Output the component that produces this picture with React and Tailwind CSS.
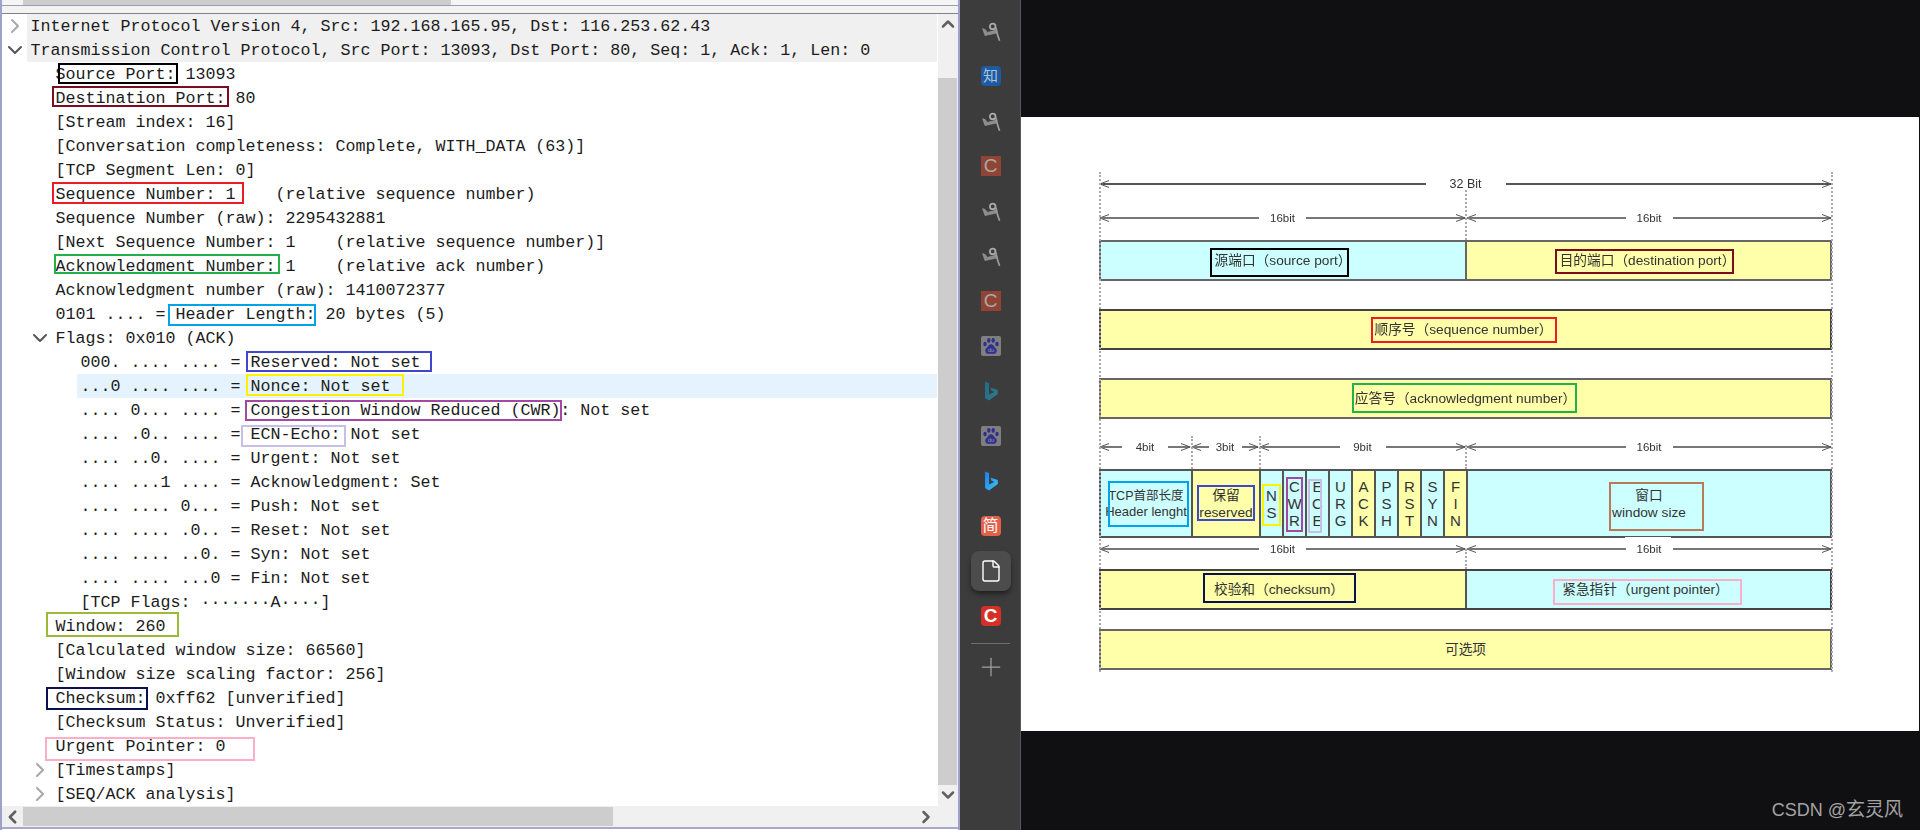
import { ChevronDown, ChevronLeft, ChevronRight, ChevronUp, File, Plus } from "lucide-react";

const rows = [
  { text: "Internet Protocol Version 4, Src: 192.168.165.95, Dst: 116.253.62.43", depth: 0, icon: "right", band: true },
  { text: "Transmission Control Protocol, Src Port: 13093, Dst Port: 80, Seq: 1, Ack: 1, Len: 0", depth: 0, icon: "down", band: true },
  { text: "Source Port: 13093", depth: 1 },
  { text: "Destination Port: 80", depth: 1 },
  { text: "[Stream index: 16]", depth: 1 },
  { text: "[Conversation completeness: Complete, WITH_DATA (63)]", depth: 1 },
  { text: "[TCP Segment Len: 0]", depth: 1 },
  { text: "Sequence Number: 1    (relative sequence number)", depth: 1 },
  { text: "Sequence Number (raw): 2295432881", depth: 1 },
  { text: "[Next Sequence Number: 1    (relative sequence number)]", depth: 1 },
  { text: "Acknowledgment Number: 1    (relative ack number)", depth: 1 },
  { text: "Acknowledgment number (raw): 1410072377", depth: 1 },
  { text: "0101 .... = Header Length: 20 bytes (5)", depth: 1 },
  { text: "Flags: 0x010 (ACK)", depth: 1, icon: "down" },
  { text: "000. .... .... = Reserved: Not set", depth: 2 },
  { text: "...0 .... .... = Nonce: Not set", depth: 2, selected: true },
  { text: ".... 0... .... = Congestion Window Reduced (CWR): Not set", depth: 2 },
  { text: ".... .0.. .... = ECN-Echo: Not set", depth: 2 },
  { text: ".... ..0. .... = Urgent: Not set", depth: 2 },
  { text: ".... ...1 .... = Acknowledgment: Set", depth: 2 },
  { text: ".... .... 0... = Push: Not set", depth: 2 },
  { text: ".... .... .0.. = Reset: Not set", depth: 2 },
  { text: ".... .... ..0. = Syn: Not set", depth: 2 },
  { text: ".... .... ...0 = Fin: Not set", depth: 2 },
  { text: "[TCP Flags: ·······A····]", depth: 2 },
  { text: "Window: 260", depth: 1 },
  { text: "[Calculated window size: 66560]", depth: 1 },
  { text: "[Window size scaling factor: 256]", depth: 1 },
  { text: "Checksum: 0xff62 [unverified]", depth: 1 },
  { text: "[Checksum Status: Unverified]", depth: 1 },
  { text: "Urgent Pointer: 0", depth: 1 },
  { text: "[Timestamps]", depth: 1, icon: "right" },
  { text: "[SEQ/ACK analysis]", depth: 1, icon: "right" },
];

const indents = ["ml-0", "ml-[25px]", "ml-[50px]"];

// hand drawn marks that sit over the packet tree
const treeMarks = [
  "left-[56px] top-[49px] w-[120px] h-[21px] border-black",
  "left-[50px] top-[72px] w-[177px] h-[21px] border-[#7b0c22]",
  "left-[50px] top-[168px] w-[192px] h-[22px] border-[#ed1c24]",
  "left-[52px] top-[240px] w-[226px] h-[20px] border-[#22b14c]",
  "left-[166px] top-[290px] w-[148px] h-[22px] border-[#00a2e8]",
  "left-[244px] top-[337px] w-[186px] h-[21px] border-[#3f48cc]",
  "left-[244px] top-[360px] w-[158px] h-[22px] border-[#fff200]",
  "left-[243px] top-[386px] w-[317px] h-[21px] border-[#a349a4]",
  "left-[239px] top-[411px] w-[105px] h-[22px] border-[#c8bfe7]",
  "left-[44px] top-[598px] w-[133px] h-[25px] border-[#9bbb38]",
  "left-[44px] top-[673px] w-[102px] h-[23px] border-[#0a1050]",
  "left-[43px] top-[723px] w-[210px] h-[24px] border-[#ffaec9]",
];

// same marks on the diagram, coordinates from the diagram's top left
const diagramMarks = [
  "left-[110px] top-[76px] w-[139px] h-[29px] border-black",
  "left-[455px] top-[77px] w-[179px] h-[25px] border-[#7b0c22]",
  "left-[271px] top-[145px] w-[186px] h-[26px] border-[#ed1c24]",
  "left-[252px] top-[211px] w-[225px] h-[30px] border-[#22b14c]",
  "left-[8px] top-[309px] w-[81px] h-[46px] border-[#00a2e8]",
  "left-[97px] top-[313px] w-[58px] h-[36px] border-[#3f48cc]",
  "left-[162px] top-[312px] w-[19px] h-[42px] border-[#fff200]",
  "left-[186px] top-[305px] w-[17px] h-[55px] border-[#a349a4]",
  "left-[208px] top-[307px] w-[14px] h-[54px] border-[#c8bfe7]",
  "left-[509px] top-[310px] w-[95px] h-[49px] border-[#b97a57]",
  "left-[103px] top-[401px] w-[153px] h-[30px] border-[#0a1050]",
  "left-[453px] top-[407px] w-[189px] h-[26px] border-[#ffaec9]",
];

const flagCells = [
  { label: "NS", bg: "bg-[#ccffff]" },
  { label: "CWR", bg: "bg-[#ccffff]" },
  { label: "ECE", bg: "bg-[#ccffff]" },
  { label: "URG", bg: "bg-[#ccffff]" },
  { label: "ACK", bg: "bg-[#ffffaa]" },
  { label: "PSH", bg: "bg-[#ccffff]" },
  { label: "RST", bg: "bg-[#ffffaa]" },
  { label: "SYN", bg: "bg-[#ccffff]" },
  { label: "FIN", bg: "bg-[#ffffaa]" },
];

const Ghost = () => (
  <svg width="20" height="20" viewBox="0 0 20 20" fill="none" stroke="#9c9c9c">
    <circle cx="11.7" cy="5.4" r="2.8" strokeWidth="1.8" stroke="#ababab" />
    <path d="M1.6 7.6 4 14.6 15.6 12 15 9 6.4 11.4 4.2 8.6Z" fill="#8c8c8c" strokeWidth="0.6" />
    <path d="M15 6.6C15.6 10.5 16.8 15.5 18.6 19.8" strokeWidth="1.7" />
  </svg>
);

const TileC = () => (
  <div className="w-5 h-5 bg-[#8f4436] text-[#a9a9a9] text-[19px] leading-5 text-center">C</div>
);

const Baidu = () => (
  <div className="w-5 h-5 bg-[#7f7f7f] rounded-[2px] flex items-center justify-center">
    <svg width="18" height="18" viewBox="0 0 18 18" fill="#2e2f8f">
      <ellipse cx="3" cy="7" rx="1.7" ry="2.2" />
      <ellipse cx="6.8" cy="3.4" rx="1.7" ry="2.3" />
      <ellipse cx="11.2" cy="3.4" rx="1.7" ry="2.3" />
      <ellipse cx="15" cy="7" rx="1.7" ry="2.2" />
      <path d="M9 7.2C6.6 7.2 6 10 4 11.5 2.4 13 3.4 16.8 6.2 16.8H11.8C14.6 16.8 15.6 13 14 11.5 12 10 11.4 7.2 9 7.2Z" />
      <text x="9" y="15.4" fontSize="6" textAnchor="middle" fill="#9a9a9a" fontFamily="Liberation Sans">du</text>
    </svg>
  </div>
);

const Bing = ({ id, from, to }) => (
  <svg width="20" height="20" viewBox="0 0 20 20">
    <defs>
      <linearGradient id={id} x1="0" y1="0" x2="1" y2="1">
        <stop offset="0" stopColor={from} />
        <stop offset="1" stopColor={to} />
      </linearGradient>
    </defs>
    <path d="M4 .5 8 2V13.6L13.2 11 10.6 9.8 9.4 6.4 16.8 9V13L8 19.5 4 17Z" fill={`url(#${id})`} />
  </svg>
);

const TextTile = ({ className, children }) => (
  <div className={`w-5 h-5 rounded-[4px] flex items-center justify-center ${className}`}>{children}</div>
);

const sidebarIcons = [
  <Ghost />,
  <TextTile className="bg-[#1f5a9e] text-[#a9c3e0] text-[15px]">知</TextTile>,
  <Ghost />,
  <TileC />,
  <Ghost />,
  <Ghost />,
  <TileC />,
  <Baidu />,
  <Bing id="bing-dim" from="#236a86" to="#2b7c8c" />,
  <Baidu />,
  <Bing id="bing-on" from="#1b7cf0" to="#38c8f0" />,
  <TextTile className="bg-[#e4604a] text-white text-[16px]">简</TextTile>,
  <File size={24} strokeWidth={1.4} className="text-white" />,
  <TextTile className="bg-[#d62f25] text-white text-[19px] font-bold">C</TextTile>,
];

const ArrowLeft = () => (
  <svg width="10" height="8" viewBox="0 0 10 8" fill="none" stroke="#555" className="shrink-0 -mr-[9px]">
    <path d="M10 .5 .8 4 10 7.5" />
  </svg>
);

const ArrowRight = () => (
  <svg width="10" height="8" viewBox="0 0 10 8" fill="none" stroke="#555" className="shrink-0 -ml-[9px]">
    <path d="M0 .5 9.2 4 0 7.5" />
  </svg>
);

const Dim = ({ className, gap, label, line = "bg-[#777]" }) => (
  <div className={`flex items-center ${className}`}>
    <ArrowLeft />
    <div className={`flex-1 h-[2px] ${line}`} />
    <div className={`text-center text-[#333] ${gap}`}>{label}</div>
    <div className={`flex-1 h-[2px] ${line}`} />
    <ArrowRight />
  </div>
);

const Diagram = () => (
  <div className="relative w-[732px]">
    <div className="relative -ml-px w-[733px] flex flex-col blur-[0.4px] text-[13.7px] text-[#333] leading-[17px]">
      <Dim className="h-6" gap="w-[80px] text-[12.5px]" label="32 Bit" line="bg-[#555]" />

      <div className="flex h-5 mt-3">
        <Dim className="w-[367px]" gap="w-[47px] text-[11.5px]" label="16bit" />
        <Dim className="flex-1" gap="w-[47px] text-[11.5px]" label="16bit" />
      </div>

      <div className="flex h-[41px] mt-3 border-2 border-[#666]">
        <div className="w-[364px] bg-[#ccffff] flex items-center justify-center">源端口（source port）</div>
        <div className="flex-1 bg-[#ffffaa] border-l-2 border-[#666] flex items-center justify-center pr-[2px]">目的端口（destination port）</div>
      </div>

      <div className="h-[41px] mt-7 border-2 border-[#444] bg-[#ffffaa] flex items-center justify-center pr-[4px]">顺序号（sequence number）</div>

      <div className="h-[41px] mt-7 border-2 border-[#666] bg-[#ffffaa] flex items-center justify-center">应答号（acknowledgment number）</div>

      <div className="flex h-5 mt-[18px]">
        <Dim className="w-[92px]" gap="w-[46px] text-[11.5px]" label="4bit" />
        <Dim className="w-[68px]" gap="w-[33px] text-[11.5px]" label="3bit" />
        <Dim className="w-[207px]" gap="w-[46px] text-[11.5px]" label="9bit" />
        <Dim className="flex-1" gap="w-[47px] text-[11.5px]" label="16bit" />
      </div>

      <div className="flex h-[69px] mt-3 border-2 border-[#555]">
        <div className="w-[90px] bg-[#ccffff] flex flex-col items-center justify-center text-[13px] leading-[16px] whitespace-nowrap">
          <div className="text-[12.5px]">TCP首部长度</div>
          <div>Header lenght</div>
        </div>
        <div className="w-[68px] bg-[#ffffaa] border-l-2 border-[#555] flex flex-col items-center justify-center">
          <div>保留</div>
          <div>reserved</div>
        </div>
        {flagCells.map((cell) => (
          <div key={cell.label} className={`w-[23px] border-l-2 border-[#555] flex flex-col items-center justify-center text-[15px] ${cell.bg}`}>
            {cell.label.split("").map((letter, i) => (
              <div key={i}>{letter}</div>
            ))}
          </div>
        ))}
        <div className="flex-1 bg-[#ccffff] border-l-2 border-[#555] flex flex-col items-center justify-center">
          <div>窗口</div>
          <div>window size</div>
        </div>
      </div>

      <div className="flex h-5 mt-px">
        <Dim className="w-[367px]" gap="w-[47px] text-[11.5px]" label="16bit" />
        <Dim className="flex-1" gap="w-[47px] text-[11.5px]" label="16bit" />
      </div>

      <div className="flex h-[41px] mt-[10px] border-2 border-[#444]">
        <div className="w-[364px] bg-[#ffffaa] flex items-center justify-center pr-[8px]">校验和（checksum）</div>
        <div className="flex-1 bg-[#ccffff] border-l-2 border-[#555] flex items-center justify-center pr-[6px]">紧急指针（urgent pointer）</div>
      </div>

      <div className="h-[41px] mt-[19px] border-2 border-[#666] bg-[#ffffaa] flex items-center justify-center">可选项</div>

      {/* dotted guides */}
      <div className="absolute left-0 top-0 h-[500px] border-l-2 border-dotted border-[#aaa]" />
      <div className="absolute left-[732px] top-0 h-[500px] border-l-2 border-dotted border-[#aaa]" />
      <div className="absolute left-[366px] top-[18px] h-[50px] border-l-2 border-dotted border-[#aaa]" />
      <div className="absolute left-[92px] top-[264px] h-[33px] border-l-2 border-dotted border-[#aaa]" />
      <div className="absolute left-[160px] top-[264px] h-[33px] border-l-2 border-dotted border-[#aaa]" />
      <div className="absolute left-[366px] top-[273px] h-[24px] border-l-2 border-dotted border-[#aaa]" />
      <div className="absolute left-[366px] top-[377px] h-[20px] border-l-2 border-dotted border-[#aaa]" />
      {/* label background eats into the border above it */}
      <div className="absolute left-[526px] top-[365px] w-[46px] h-[2px] bg-white" />
    </div>

    {diagramMarks.map((mark) => (
      <div key={mark} className={`absolute border-2 ${mark}`} />
    ))}
  </div>
);

const TreeRow = ({ row }) => {
  const bandBg = row.selected ? "bg-[#e5f3ff]" : row.band ? "bg-[#f0f0f0]" : "";
  return (
    <div className={`flex h-6 ${indents[row.depth]}`}>
      <div className="w-[25px] shrink-0 flex items-center justify-center">
        {row.icon === "right" && <ChevronRight size={24} strokeWidth={2} className="text-[#a8a8a8]" />}
        {row.icon === "down" && <ChevronDown size={24} strokeWidth={2} className="text-[#555]" />}
      </div>
      <div className={`flex-1 pl-[3.6px] pt-px mr-px leading-6 whitespace-pre ${bandBg}`}>{row.text}</div>
    </div>
  );
};

const App = () => {
  return (
    <div className="flex w-[1920px] h-[830px] overflow-hidden bg-white font-['Liberation_Sans','Noto_Sans_CJK_SC',sans-serif]">
      {/* Wireshark detail pane */}
      <div className="w-[960px] h-full flex flex-col border-x-2 border-[#a0a0cc]">
        <div className="h-[5px] bg-[#f5f5f5]">
          <div className="ml-[21px] w-[428px] h-full bg-[#cdcdcd]" />
        </div>
        <div className="h-px bg-[#9c9cb4]" />
        <div className="h-[7px] bg-[#f3f3f3]" />
        <div className="h-px bg-[#82828e]" />

        <div className="flex h-[792px]">
          <div className="relative flex-1 font-['Liberation_Mono',monospace] text-[16.66px] text-[#1c1c1c]">
            {rows.map((row) => (
              <TreeRow key={row.text} row={row} />
            ))}
            {treeMarks.map((mark) => (
              <div key={mark} className={`absolute border-2 ${mark}`} />
            ))}
          </div>
          <div className="w-5 bg-[#f0f0f0] flex flex-col">
            <div className="h-5 flex items-center justify-center">
              <ChevronUp size={20} strokeWidth={3} className="text-[#606060]" />
            </div>
            <div className="h-[44px]" />
            <div className="h-[707px] bg-[#cdcdcd] mr-px" />
            <div className="h-5 flex items-center justify-center">
              <ChevronDown size={20} strokeWidth={3} className="text-[#606060]" />
            </div>
          </div>
        </div>

        <div className="flex items-center h-[21px] py-px bg-[#f0f0f0]">
          <div className="w-[21px] flex items-center justify-center">
            <ChevronLeft size={24} strokeWidth={3} className="text-[#606060]" />
          </div>
          <div className="w-[590px] h-full bg-[#cdcdcd]" />
          <div className="ml-[303px] w-[20px] flex items-center justify-center">
            <ChevronRight size={24} strokeWidth={3} className="text-[#606060]" />
          </div>
        </div>
        <div className="h-[2px] bg-[#a8a8c8]" />
      </div>

      {/* Sidebar */}
      <aside className="w-[61px] h-full bg-[#3c3c3c] border-r border-[#5a5a5a] pl-px pt-[9px] flex flex-col items-center">
        {sidebarIcons.map((icon, i) => (
          <div key={i} className="h-[45px] flex justify-center pt-3">
            {i === 12 ? (
              <div className="w-10 h-10 -mt-[10px] bg-[#4c4c4c] rounded-lg shadow-md shadow-black/40 flex items-center justify-center">{icon}</div>
            ) : (
              icon
            )}
          </div>
        ))}
        <div className="w-[39px] h-px mt-1 bg-[#6e6e6e]" />
        <Plus size={30} strokeWidth={1} className="mt-2 text-[#a0a0a0]" />
      </aside>

      {/* Image viewer */}
      <div className="flex-1 h-full flex flex-col bg-[#101012] border-r border-[#101012]">
        <div className="h-[117px]" />
        <div className="h-[614px] bg-white pl-[79px] pt-[55px]">
          <Diagram />
        </div>
        <div className="flex-1 flex items-end justify-end pr-[16px] pb-[6px] text-[18px] text-[#a3a3a3]">
          <span>CSDN @<span className="text-[19px]">玄灵风</span></span>
        </div>
      </div>
    </div>
  );
};

export default App;
